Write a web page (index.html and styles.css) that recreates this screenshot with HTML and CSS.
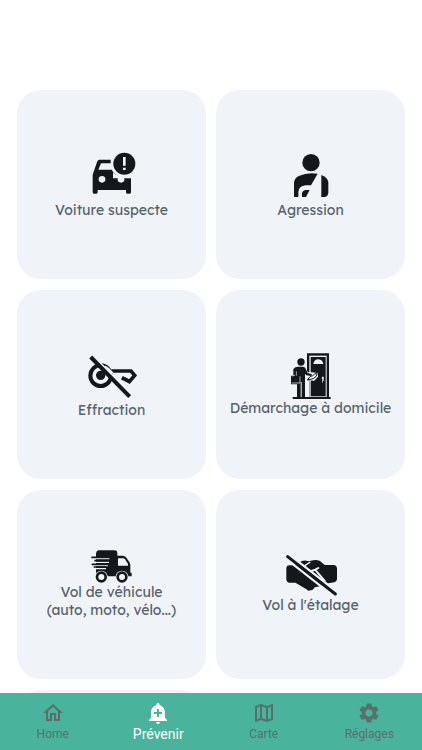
FILE: index.html
```html
<!DOCTYPE html>
<html lang="fr">
<head>
<meta charset="utf-8">
<meta name="viewport" content="width=device-width, initial-scale=1">
<title>Prévenir</title>
<link rel="stylesheet" href="styles.css">
</head>
<body>
<main class="content">
  <div class="grid">
    <button class="card" type="button">
      <svg class="icon" viewBox="110 30 150 150" aria-hidden="true">
        <path d="M147 56H181V67H152L144 86H184Q192 101 209 108Q227 114 242 106V154Q242 158 238 158H231Q227 158 227 153V147H142V153Q142 158 138 158H131Q127 158 127 153V101L141 61Q143 56 147 56Z"/>
        <circle class="hole" cx="155" cy="115" r="10"/>
        <circle class="hole" cx="212" cy="115" r="10"/>
        <circle cx="222" cy="68" r="37" class="hole"/>
        <path d="M188 94Q201 108 222 107Q235 107 246 98V112H188Z" class="hole"/>
        <circle cx="222" cy="68" r="33"/>
        <path class="hole" d="M218 48H226V74H218ZM218 80H226V87H218Z"/>
      </svg>
      <span class="label">Voiture suspecte</span>
    </button>
    <button class="card" type="button">
      <svg class="icon" viewBox="107 33 150 150" aria-hidden="true">
        <circle cx="182" cy="68" r="26"/>
        <path d="M131 171V130Q131 114 147 107Q172 96 202 101L182 136H166Q145 138 144 156V171Z"/>
        <path d="M155 171V159Q157 151 165 150H178L167 171Z"/>
        <path d="M213 105Q234 112 234 130V158Q233 170 222 171H213Z"/>
      </svg>
      <span class="label">Agression</span>
    </button>
    <button class="card" type="button">
      <svg class="icon" viewBox="80 17 150 150" aria-hidden="true">
        <circle class="line" cx="121" cy="91" r="31" stroke-width="12"/>
        <path class="line" d="M153 77H212L223 90L207 109L195 102L185 98" stroke-width="11"/>
        <path class="hole-line" d="M101 36L214 148" stroke-width="8"/>
        <path class="hole" d="M136 61L146 68L160 83L152 87L130 66Z"/>
        <circle cx="121" cy="90" r="14"/>
        <path class="line" d="M91 35L208 154" stroke-width="12"/>
        <path class="line" d="M185 97L205 107" stroke-width="10"/>
      </svg>
      <span class="label">Effraction</span>
    </button>
    <button class="card" type="button">
      <svg class="icon icon-door" viewBox="182 20 150 138" aria-hidden="true">
        <path d="M245 21H311V152H316V158H202V152H245Z"/>
        <path class="hole" d="M252 28H304V152H252Z"/>
        <path d="M256 32H301V150H256Z"/>
        <path class="hole" d="M264 53Q266 39 279 39Q292 40 294 53ZM290 91H295V104H293V109H291V97H289Z"/>
        <path class="hole" d="M239 68L249 78H259L278 80V91L267 103L241 102V152H251V103L256 102V99H245Z"/>
        <circle cx="227" cy="47" r="11"/>
        <path d="M217 61H233Q239 61 241 67L247 80L260 84L258 89L243 87L239 82V154H229V107H226V154H215V114H197V88H204V69Q207 62 217 61Z"/>
        <path class="line" d="M248 98Q254 89 262 88Q268 80 276 82Q274 92 265 96Q258 100 248 99Z" stroke-width="3"/>
        <path class="hole-line" d="M213 75V88M224 90V110H199M202 91Q202 86 209 87" stroke-width="2"/>
      </svg>
      <span class="label">Démarchage à domicile</span>
    </button>
    <button class="card" type="button">
      <svg class="icon icon-truck" viewBox="140 26 150 99" aria-hidden="true">
        <path d="M174 27H224Q231 28 231 35V43H248Q253 43 257 48L267 62Q270 66 270 72V94H274V105H167V37Q167 29 174 27Z"/>
        <path class="hole" d="M239 51H248Q252 51 254 54L263 68V73H233V51Z"/>
        <path class="hole-line" d="M160 52H207M160 63H206M160 73H202M163 82H197" stroke-width="4"/>
        <path class="line" d="M153 48H206M162 58H207M154 69H201M160 77H198" stroke-width="5"/>
        <circle class="hole" cx="183" cy="107" r="19"/>
        <circle class="hole" cx="245" cy="107" r="19"/>
        <circle class="line" cx="183" cy="107" r="13" stroke-width="8"/>
        <circle class="line" cx="245" cy="107" r="13" stroke-width="8"/>
      </svg>
      <span class="label">Vol de véhicule<br>(auto, moto, vélo...)</span>
    </button>
    <button class="card" type="button">
      <svg class="icon icon-theft" viewBox="85 27 162 123" aria-hidden="true">
        <path d="M92 65Q93 58 101 58H114L139 45Q147 42 158 46L166 44Q181 40 193 45L207 57H236Q243 58 244 66V100Q243 107 236 109L218 112L196 120L178 124L170 132L158 134L151 129L127 115L119 110H100Q93 108 92 101Z"/>
        <path class="hole-line" d="M102 27L244 138" stroke-width="7"/>
        <path class="hole-line" d="M102 47L228 146" stroke-width="7"/>
        <path class="hole-line" d="M143 62L164 48" stroke-width="4"/>
        <path class="hole-line" d="M168 75Q180 71 188 66M180 73L207 105" stroke-width="6" stroke-linecap="round"/>
        <path class="line" d="M96 32L239 144" stroke-width="9" stroke-linecap="round"/>
      </svg>
      <span class="label">Vol à l'étalage</span>
    </button>
    <button class="card" type="button" aria-label="Autre"></button>
  </div>
</main>
<nav class="tabs">
  <a class="tab" href="#home">
    <svg class="tab-icon" viewBox="0 0 24 24" aria-hidden="true"><path d="M12 5.69l5 4.5V18h-2v-6H9v6H7v-7.81l5-4.5M12 3L2 12h3v8h6v-6h2v6h6v-8h3L12 3z"/></svg>
    <span>Home</span>
  </a>
  <a class="tab tab-active" href="#prevenir" aria-current="page">
    <svg class="tab-icon" viewBox="0 0 24 24" aria-hidden="true"><path d="M10.01 21.01c0 1.1.89 1.99 1.99 1.99s1.99-.89 1.99-1.99h-3.98zm8.87-4.19V11c0-3.25-2.25-5.97-5.29-6.69v-.72C13.59 2.71 12.88 2 12 2s-1.59.71-1.59 1.59v.72C7.37 5.03 5.12 7.75 5.12 11v5.82L3 18.94V20h18v-1.06l-2.12-2.12zM16 13.01h-3v3h-2v-3H8V11h3V8h2v3h3v2.01z"/></svg>
    <span>Prévenir</span>
  </a>
  <a class="tab" href="#carte">
    <svg class="tab-icon" viewBox="0 0 24 24" aria-hidden="true"><path d="M20.5 3l-.16.03L15 5.1 9 3 3.36 4.9c-.21.07-.36.25-.36.48V20.5c0 .28.22.5.5.5l.16-.03L9 18.9l6 2.1 5.64-1.9c.21-.07.36-.25.36-.48V3.5c0-.28-.22-.5-.5-.5zM10 5.47l4 1.4v11.66l-4-1.4V5.47zm-5 .99l3-1.01v11.7l-3 1.16V6.46zm14 11.08l-3 1.01V6.86l3-1.16v11.84z"/></svg>
    <span>Carte</span>
  </a>
  <a class="tab" href="#reglages">
    <svg class="tab-icon" viewBox="0 0 24 24" aria-hidden="true"><path d="M19.14 12.94c.04-.3.06-.61.06-.94 0-.32-.02-.64-.07-.94l2.03-1.58c.18-.14.23-.41.12-.61l-1.92-3.32c-.12-.22-.37-.29-.59-.22l-2.39.96c-.5-.38-1.03-.7-1.62-.94l-.36-2.54c-.04-.24-.24-.41-.48-.41h-3.84c-.24 0-.43.17-.47.41l-.36 2.54c-.59.24-1.13.57-1.62.94l-2.39-.96c-.22-.08-.47 0-.59.22L2.74 8.87c-.12.21-.08.47.12.61l2.03 1.58c-.05.3-.09.63-.09.94s.02.64.07.94l-2.03 1.58c-.18.14-.23.41-.12.61l1.92 3.32c.12.22.37.29.59.22l2.39-.96c.5.38 1.03.7 1.62.94l.36 2.54c.05.24.24.41.48.41h3.84c.24 0 .44-.17.47-.41l.36-2.54c.59-.24 1.13-.56 1.62-.94l2.39.96c.22.08.47 0 .59-.22l1.92-3.32c.12-.22.07-.47-.12-.61l-2.01-1.58zM12 15.6c-1.98 0-3.6-1.62-3.6-3.6s1.62-3.6 3.6-3.6 3.6 1.62 3.6 3.6-1.62 3.6-3.6 3.6z"/></svg>
    <span>Réglages</span>
  </a>
</nav>
</body>
</html>
```
FILE: styles.css
```css
* { box-sizing: border-box; }

body {
  margin: 0;
  height: 100vh;
  display: flex;
  flex-direction: column;
  background: #fff;
  font-family: Roboto, sans-serif;
}

.content {
  flex: 1;
  min-height: 0;
  overflow: hidden;
  padding: 90px 17px 0;
}

.grid {
  display: grid;
  grid-template-columns: repeat(2, minmax(0, 1fr));
  gap: 11px 10px;
}

.card {
  aspect-ratio: 1;
  display: flex;
  flex-direction: column;
  align-items: center;
  justify-content: center;
  padding: 0;
  border: 0;
  border-radius: 24px;
  background: #f0f3f8;
  color: #57636c;
  font-family: Lexend, Lato, sans-serif;
  font-size: 14px;
  line-height: 18px;
  cursor: pointer;
}

.label { white-space: nowrap; }

.icon {
  width: 50px;
  height: 50px;
  fill: #14181b;
}
.icon-door { height: 46px; }
.icon-truck { height: 33px; }
.icon-theft { width: 54px; height: 41px; }

.icon .hole { fill: #f0f3f8; }
.icon .line { fill: none; stroke: #14181b; }
.icon .hole-line { fill: none; stroke: #f0f3f8; }

.tabs {
  display: flex;
  height: 57px;
  background: #49b49b;
}

.tab {
  flex: 1;
  display: flex;
  flex-direction: column;
  align-items: center;
  padding-top: 8px;
  color: #57706c;
  font-size: 12px;
  line-height: 18px;
  text-decoration: none;
}
.tab-active {
  color: #fff;
  font-size: 14px;
}

.tab-icon {
  width: 24px;
  height: 24px;
  fill: currentColor;
}
```
